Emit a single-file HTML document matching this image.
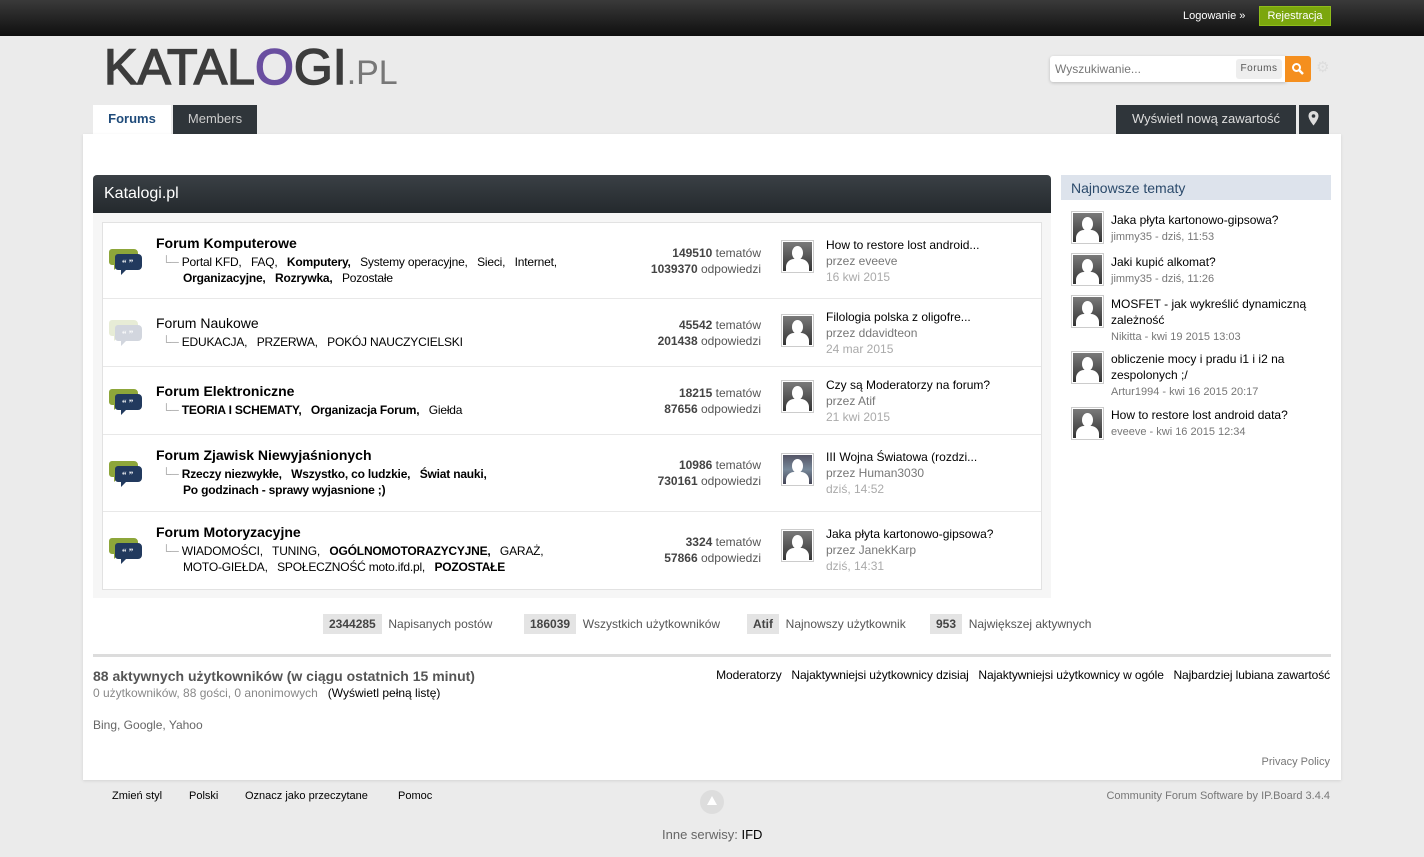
<!DOCTYPE html>
<html><head><meta charset="utf-8"><style>
*{margin:0;padding:0;box-sizing:border-box}
body{width:1424px;height:857px;background:#ebebeb;font-family:"Liberation Sans",Arial,sans-serif;font-size:12px;color:#000;position:relative;overflow:hidden}
.a{position:absolute;white-space:nowrap}
.top{left:0;top:0;width:1424px;height:36px;background:linear-gradient(#3a3a3a,#0f0f0f)}
.g{color:#777}
.row{position:absolute;left:103px;width:938px;border-bottom:1px solid #e8e8e8;background:#fff}
.t{font-size:14px;font-weight:bold}
.sub{font-size:12px;letter-spacing:-0.2px}
.b{font-weight:bold}
.av{position:absolute;width:33px;height:33px;border:1px solid #ccc;background:#fff;padding:1px}
.av i{display:block;width:100%;height:100%;background:linear-gradient(#7a7a7a,#333);position:relative;overflow:hidden}
.av i:before{content:"";position:absolute;left:9px;top:4px;width:11px;height:14px;border-radius:50%;background:#fff}
.av i:after{content:"";position:absolute;left:3px;top:17px;width:23px;height:16px;border-radius:8px 8px 0 0;background:#fff}
.st{text-align:right;color:#555}
.st b{color:#444}
.sb{font-size:12px}
</style></head><body>
<div class="a top"></div>
<div class="a" style="left:1183px;top:10px;color:#fff;font-size:11px">Logowanie »</div>
<div class="a" style="left:1259px;top:6px;width:72px;height:20px;background:#7ba60d;color:#fff;font-size:11px;text-align:center;line-height:19px;border:1px solid #8fbd1a">Rejestracja</div>

<div class="a" style="left:104px;top:40px;font-size:50px;color:#3c3c3c;letter-spacing:0px;-webkit-text-stroke:1.5px #3c3c3c;line-height:54px">KATAL<span style="color:#6a4fa0;-webkit-text-stroke:1.5px #6a4fa0">O</span>GI<span style="font-size:34px;color:#777;-webkit-text-stroke:0">.PL</span></div>

<div class="a" style="left:1050px;top:56px;width:236px;height:26px;background:#fff;border-radius:3px 0 0 3px;box-shadow:0 1px 3px rgba(0,0,0,.2)"></div>
<div class="a" style="left:1055px;top:62px;color:#777;font-size:12px">Wyszukiwanie...</div>
<div class="a" style="left:1236px;top:59px;width:46px;height:20px;background:#eee;border-radius:3px;color:#555;font-size:10px;line-height:20px;text-align:center;letter-spacing:.5px">Forums</div>
<div class="a" style="left:1285px;top:56px;width:26px;height:26px;background:#f58f1e;border-radius:0 3px 3px 0"></div>
<svg class="a" style="left:1291px;top:62px" width="14" height="14" viewBox="0 0 14 14"><circle cx="5.5" cy="5.5" r="3.5" stroke="#fff" stroke-width="2" fill="none"/><path d="M8 8l4 4" stroke="#fff" stroke-width="2.5"/></svg>
<div class="a" style="left:1316px;top:58px;color:#ddd;font-size:15px">⚙</div>

<div class="a" style="left:93px;top:105px;width:78px;height:30px;background:#fff;color:#1f4b7a;font-weight:bold;font-size:13px;text-align:center;line-height:27px">Forums</div>
<div class="a" style="left:173px;top:105px;width:84px;height:29px;background:#2f353a;color:#ccc;font-size:13px;text-align:center;line-height:27px">Members</div>
<div class="a" style="left:1116px;top:105px;width:180px;height:29px;background:#2f353a;color:#ddd;font-size:13px;text-align:center;line-height:27px">Wyświetl nową zawartość</div>
<div class="a" style="left:1299px;top:105px;width:30px;height:29px;background:#2f353a"></div>
<svg class="a" style="left:1308px;top:111px" width="11" height="15" viewBox="0 0 11 15"><path d="M5.5 0C2.5 0 0.5 2.2 0.5 5c0 3.5 5 9.5 5 9.5s5-6 5-9.5C10.5 2.2 8.5 0 5.5 0z" fill="#ddd"/><circle cx="5.5" cy="5" r="1.8" fill="#2f353a"/></svg>

<div class="a" style="left:83px;top:134px;width:1258px;height:646px;background:#fff;box-shadow:0 1px 3px rgba(0,0,0,.1)"></div>

<div class="a" style="left:93px;top:175px;width:958px;height:38px;background:linear-gradient(#3a4045,#24292d);border-radius:4px 4px 0 0;color:#fff;font-size:16px;line-height:38px;padding-left:11px">Katalogi.pl</div>
<div class="a" style="left:93px;top:213px;width:958px;height:385px;background:#f6f6f6"></div>
<div class="a" style="left:102px;top:222px;width:940px;height:368px;border:1px solid #e2e2e2;background:#fff"></div>

<div class="row" style="top:223px;height:76px"></div>
<div class="row" style="top:299px;height:68px"></div>
<div class="row" style="top:367px;height:68px"></div>
<div class="row" style="top:435px;height:77px"></div>
<div class="row" style="top:512px;height:77px;border-bottom:none"></div>

<svg width="0" height="0" style="position:absolute"><defs><g id="ic"><path d="M3 4h22a4 4 0 0 1 4 4v8a4 4 0 0 1-4 4H10l-5 5v-5H3a3 3 0 0 1-3-3V7a3 3 0 0 1 3-3z" fill="#8da63a"/><path d="M9 9h20a4 4 0 0 1 4 4v8a4 4 0 0 1-4 4H17l-5 5v-5H9a3 3 0 0 1-3-3V12a3 3 0 0 1 3-3z" fill="#223a5e"/><text x="13" y="21" font-size="9" fill="#fff" font-family="Liberation Serif" font-weight="bold">“ ”</text></g></defs></svg>
<svg class="a" style="left:109px;top:245px" width="34" height="32"><use href="#ic"/></svg>
<svg class="a" style="left:109px;top:316px;opacity:.2" width="34" height="32"><use href="#ic"/></svg>
<svg class="a" style="left:109px;top:385px" width="34" height="32"><use href="#ic"/></svg>
<svg class="a" style="left:109px;top:457px" width="34" height="32"><use href="#ic"/></svg>
<svg class="a" style="left:109px;top:534px" width="34" height="32"><use href="#ic"/></svg>

<div class="a t" style="left:156px;top:235px">Forum Komputerowe</div>
<div class="a sub" style="left:162px;top:255px"><span style="color:#aaa">└─</span> Portal KFD, &nbsp; FAQ, &nbsp; <b>Komputery,</b> &nbsp; Systemy operacyjne, &nbsp; Sieci, &nbsp; Internet,</div>
<div class="a sub" style="left:183px;top:271px"><b>Organizacyjne,</b> &nbsp; <b>Rozrywka,</b> &nbsp; Pozostałe</div>

<div class="a" style="left:156px;top:315px;font-size:14px">Forum Naukowe</div>
<div class="a sub" style="left:162px;top:335px"><span style="color:#aaa">└─</span> EDUKACJA, &nbsp; PRZERWA, &nbsp; POKÓJ NAUCZYCIELSKI</div>

<div class="a t" style="left:156px;top:383px">Forum Elektroniczne</div>
<div class="a sub" style="left:162px;top:403px"><span style="color:#aaa">└─</span> <b>TEORIA I SCHEMATY,</b> &nbsp; <b>Organizacja Forum,</b> &nbsp; Giełda</div>

<div class="a t" style="left:156px;top:447px">Forum Zjawisk Niewyjaśnionych</div>
<div class="a sub" style="left:162px;top:467px"><span style="color:#aaa">└─</span> <b>Rzeczy niezwykłe,</b> &nbsp; <b>Wszystko, co ludzkie,</b> &nbsp; <b>Świat nauki,</b></div>
<div class="a sub b" style="left:183px;top:483px">Po godzinach - sprawy wyjasnione ;)</div>

<div class="a t" style="left:156px;top:524px">Forum Motoryzacyjne</div>
<div class="a sub" style="left:162px;top:544px"><span style="color:#aaa">└─</span> WIADOMOŚCI, &nbsp; TUNING, &nbsp; <b>OGÓLNOMOTORAZYCYJNE,</b> &nbsp; GARAŻ,</div>
<div class="a sub" style="left:183px;top:560px">MOTO-GIEŁDA, &nbsp; SPOŁECZNOŚĆ moto.ifd.pl, &nbsp; <b>POZOSTAŁE</b></div>

<div class="a st" style="right:663px;top:245px;line-height:16px"><b>149510</b> tematów<br><b>1039370</b> odpowiedzi</div>
<div class="a st" style="right:663px;top:317px;line-height:16px"><b>45542</b> tematów<br><b>201438</b> odpowiedzi</div>
<div class="a st" style="right:663px;top:385px;line-height:16px"><b>18215</b> tematów<br><b>87656</b> odpowiedzi</div>
<div class="a st" style="right:663px;top:457px;line-height:16px"><b>10986</b> tematów<br><b>730161</b> odpowiedzi</div>
<div class="a st" style="right:663px;top:534px;line-height:16px"><b>3324</b> tematów<br><b>57866</b> odpowiedzi</div>

<div class="av" style="left:781px;top:240px"><i></i></div>
<div class="av" style="left:781px;top:314px"><i></i></div>
<div class="av" style="left:781px;top:380px"><i></i></div>
<div class="av" style="left:781px;top:453px"><i style="background:linear-gradient(#556,#789 50%,#445)"></i></div>
<div class="av" style="left:781px;top:529px"><i></i></div>

<div class="a" style="left:826px;top:237px;line-height:16px">How to restore lost android...<br><span class="g">przez eveeve</span><br><span style="color:#aaa">16 kwi 2015</span></div>
<div class="a" style="left:826px;top:309px;line-height:16px">Filologia polska z oligofre...<br><span class="g">przez ddavidteon</span><br><span style="color:#aaa">24 mar 2015</span></div>
<div class="a" style="left:826px;top:377px;line-height:16px">Czy są Moderatorzy na forum?<br><span class="g">przez Atif</span><br><span style="color:#aaa">21 kwi 2015</span></div>
<div class="a" style="left:826px;top:449px;line-height:16px">III Wojna Światowa (rozdzi...<br><span class="g">przez Human3030</span><br><span style="color:#aaa">dziś, 14:52</span></div>
<div class="a" style="left:826px;top:526px;line-height:16px">Jaka płyta kartonowo-gipsowa?<br><span class="g">przez JanekKarp</span><br><span style="color:#aaa">dziś, 14:31</span></div>

<div class="a" style="left:1061px;top:175px;width:270px;height:25px;background:#dde3ec;color:#2b4a6b;font-size:14px;line-height:26px;padding-left:10px">Najnowsze tematy</div>
<div class="av" style="left:1071px;top:211px"><i></i></div>
<div class="av" style="left:1071px;top:253px"><i></i></div>
<div class="av" style="left:1071px;top:295px"><i></i></div>
<div class="av" style="left:1071px;top:351px"><i></i></div>
<div class="av" style="left:1071px;top:407px"><i></i></div>
<div class="a sb" style="left:1111px;top:212px;line-height:16px">Jaka płyta kartonowo-gipsowa?<br><span class="g" style="font-size:11px">jimmy35 - dziś, 11:53</span></div>
<div class="a sb" style="left:1111px;top:254px;line-height:16px">Jaki kupić alkomat?<br><span class="g" style="font-size:11px">jimmy35 - dziś, 11:26</span></div>
<div class="a sb" style="left:1111px;top:296px;line-height:16px">MOSFET - jak wykreślić dynamiczną<br>zależność<br><span class="g" style="font-size:11px">Nikitta - kwi 19 2015 13:03</span></div>
<div class="a sb" style="left:1111px;top:351px;line-height:16px">obliczenie mocy i pradu i1 i i2 na<br>zespolonych ;/<br><span class="g" style="font-size:11px">Artur1994 - kwi 16 2015 20:17</span></div>
<div class="a sb" style="left:1111px;top:407px;line-height:16px">How to restore lost android data?<br><span class="g" style="font-size:11px">eveeve - kwi 16 2015 12:34</span></div>

<div class="a" style="left:323px;top:614px;height:20px;line-height:20px;color:#555"><b style="background:#e4e4e4;padding:3px 6px;color:#444">2344285</b>&nbsp; Napisanych postów</div>
<div class="a" style="left:524px;top:614px;height:20px;line-height:20px;color:#555"><b style="background:#e4e4e4;padding:3px 6px;color:#444">186039</b>&nbsp; Wszystkich użytkowników</div>
<div class="a" style="left:747px;top:614px;height:20px;line-height:20px;color:#555"><b style="background:#e4e4e4;padding:3px 6px;color:#444">Atif</b>&nbsp; Najnowszy użytkownik</div>
<div class="a" style="left:930px;top:614px;height:20px;line-height:20px;color:#555"><b style="background:#e4e4e4;padding:3px 6px;color:#444">953</b>&nbsp; Największej aktywnych</div>

<div class="a" style="left:93px;top:654px;width:1238px;height:3px;background:#dcdcdc"></div>
<div class="a" style="left:93px;top:668px;font-size:14px;font-weight:bold;color:#555">88 aktywnych użytkowników (w ciągu ostatnich 15 minut)</div>
<div class="a" style="left:93px;top:686px;color:#888">0 użytkowników, 88 gości, 0 anonimowych &nbsp; <span style="color:#000">(Wyświetl pełną listę)</span></div>
<div class="a" style="left:93px;top:718px;color:#666">Bing, Google, Yahoo</div>
<div class="a" style="right:94px;top:668px;letter-spacing:-0.1px">Moderatorzy &nbsp; Najaktywniejsi użytkownicy dzisiaj &nbsp; Najaktywniejsi użytkownicy w ogóle &nbsp; Najbardziej lubiana zawartość</div>
<div class="a" style="right:94px;top:756px;color:#777;font-size:11px">Privacy Policy</div>

<div class="a" style="left:112px;top:790px;font-size:11px">Zmień styl</div>
<div class="a" style="left:189px;top:790px;font-size:11px">Polski</div>
<div class="a" style="left:245px;top:790px;font-size:11px">Oznacz jako przeczytane</div>
<div class="a" style="left:398px;top:790px;font-size:11px">Pomoc</div>
<div class="a" style="left:700px;top:790px;width:24px;height:24px;border-radius:50%;background:#ddd"></div>
<div class="a" style="left:707px;top:796px;width:0;height:0;border-left:5px solid transparent;border-right:5px solid transparent;border-bottom:9px solid #fff"></div>
<div class="a" style="right:94px;top:790px;font-size:11px;color:#777">Community Forum Software by IP.Board 3.4.4</div>
<div class="a" style="left:662px;top:827px;color:#666;font-size:13px">Inne serwisy: <span style="color:#000">IFD</span></div>
</body></html>
